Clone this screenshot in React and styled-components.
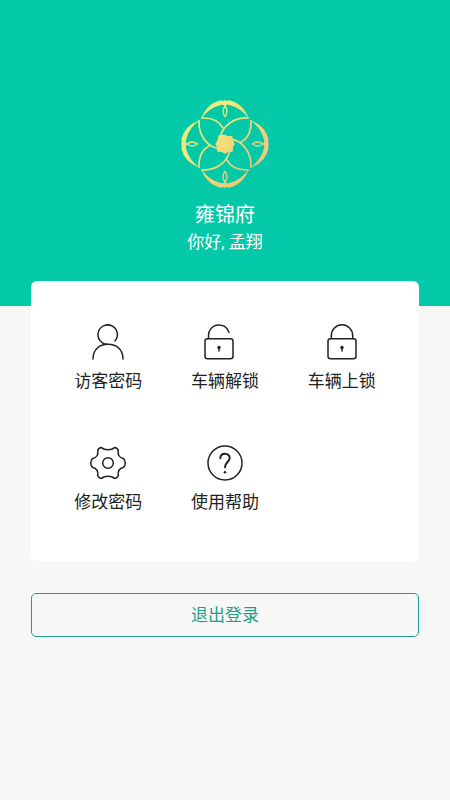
import React from 'react'
import styled, { createGlobalStyle } from 'styled-components'

const GlobalStyle = createGlobalStyle`
    * {
        box-sizing: border-box;
    }
    body {
        margin: 0;
        background: #F7F7F7;
        font-family: Roboto, 'Noto Sans CJK SC', sans-serif;
    }
`
const Page = styled.div`
    display: flex;
    flex-direction: column;
    min-height: 100vh;
`
const Header = styled.header`
    display: flex;
    flex-direction: column;
    align-items: center;
    padding: 100px 16px 51px;
    background: #03C9A8;
    color: #FFFFFF;
`
const Title = styled.h1`
    margin: 13px 0 0;
    font-weight: 400;
    font-size: 20px;
    line-height: 28px;
`
const Greeting = styled.p`
    margin: 0;
    font-size: 17px;
    line-height: 26px;
`
const Content = styled.main`
    display: flex;
    flex-direction: column;
    gap: 32px;
    padding: 0 31px 32px;
    margin-top: -25px;
`
const Card = styled.nav`
    display: grid;
    grid-template-columns: repeat(3, 1fr);
    row-gap: 50px;
    padding: 43px 19px 45px;
    background: #FFFFFF;
    border-radius: 6px;
`
const MenuButton = styled.button`
    display: flex;
    flex-direction: column;
    align-items: center;
    gap: 7px;
    padding: 0;
    border: 0;
    background: none;
    color: #222222;
    font-family: inherit;
    font-size: 17px;
    line-height: 28px;
    cursor: pointer;
`
const Icon = styled.svg`
    width: 36px;
    height: 36px;
    fill: none;
    stroke: #222222;
    stroke-width: 1.5;
    stroke-linecap: round;
    stroke-linejoin: round;
    overflow: visible;
`
const LogoutButton = styled.button`
    height: 44px;
    border: 1px solid #1F9E8A;
    border-radius: 5px;
    background: transparent;
    color: #1F9E8A;
    font-family: inherit;
    font-size: 17px;
    line-height: 28px;
    cursor: pointer;
`

const Petal = ({ angle }) => (
    <g transform={`rotate(${angle} 150 150)`}>
        <path
            fill="#fff"
            stroke="none"
            d="M79 74Q95 28 138 19L144 21L150 18L156 21L162 19Q205 28 221 74Q199 42 163 33Q156 31 150 36Q144 31 137 33Q101 42 79 74Z"
        />
        <path strokeWidth="4" d="M150 36Q138 52 150 68Q162 52 150 36Z" />
        <path strokeWidth="5" d="M80 72Q127 70 145 103" />
        <path strokeWidth="5" d="M220 72C182 70 136 92 134 144" />
    </g>
)

const Logo = () => (
    <svg width="88" height="88" viewBox="18 18 264 264" aria-hidden="true">
        <defs>
            <linearGradient id="gold" x1="0" y1="0" x2="1" y2="1">
                <stop offset="0.1" stopColor="#E8F77D" />
                <stop offset="0.5" stopColor="#F3DB78" />
                <stop offset="0.9" stopColor="#E9C37A" />
            </linearGradient>
            <mask id="flower" maskUnits="userSpaceOnUse" x="0" y="0" width="300" height="300">
                <g fill="none" stroke="#fff" strokeLinecap="round">
                    {[0, 90, 180, 270].map(angle => <Petal key={angle} angle={angle} />)}
                </g>
                <path
                    fill="#fff"
                    d="M131 124L150 122L158 126L172 127L174 139L179 150L174 160L173 173L160 174L150 179L140 174L127 173L126 160L121 150L127 140Z"
                />
            </mask>
        </defs>
        <rect x="18" y="18" width="264" height="264" fill="url(#gold)" mask="url(#flower)" />
    </svg>
)

const VisitorIcon = () => (
    <Icon viewBox="0 0 36 36">
        <path d="M25 17A9.7 9.7 0 1 0 17 20.3" />
        <path d="M3 35C3 26 9 20.3 18 20.3S33 26 33 35" />
    </Icon>
)

const Keyhole = () => (
    <>
        <circle cx="18" cy="23.5" r="1.7" fill="#222222" stroke="none" />
        <path d="M18 24V27" />
    </>
)

const UnlockIcon = () => (
    <Icon viewBox="6 0 36 36">
        <rect x="4" y="14.7" width="28" height="20" rx="2.5" />
        <path d="M7.5 14.5V11.5A10.5 10.5 0 0 1 28 8.2" />
        <Keyhole />
    </Icon>
)

const LockIcon = () => (
    <Icon viewBox="0 0 36 36">
        <rect x="4" y="14.7" width="28" height="20" rx="2.5" />
        <path d="M7.3 14.5V11.5A10.7 10.7 0 0 1 28.7 11.5V14.5" />
        <Keyhole />
    </Icon>
)

const SettingsIcon = () => (
    <Icon viewBox="0 0 36 36">
        <path d="M11.5 2.6C9.5 2.8 8.2 4 7.7 5.5C8.5 9.5 6.5 12.7 2.3 13.8Q.8 15.5 .8 18T2.3 22.2C6.5 23.3 8.5 26.5 7.7 30.5C8.2 32 9.5 33.2 11.5 33.4C14.5 30.5 21.5 30.5 24.5 33.4C26.5 33.2 27.8 32 28.3 30.5C27.5 26.5 29.5 23.3 33.7 22.2Q35.2 20.5 35.2 18T33.7 13.8C29.5 12.7 27.5 9.5 28.3 5.5C27.8 4 26.5 2.8 24.5 2.6C21.5 5.5 14.5 5.5 11.5 2.6Z" />
        <circle cx="18" cy="18" r="5.3" />
    </Icon>
)

const HelpIcon = () => (
    <Icon viewBox="0 0 36 36">
        <circle cx="18" cy="18" r="17" />
        <path strokeWidth="2" d="M13.3 13.3C13.3 10.3 15.3 8.7 18 8.7S22.7 10.5 22.7 13.2C22.7 16.5 18 17.3 18 22.3" />
        <circle cx="18" cy="27.2" r="1.3" fill="#222222" stroke="none" />
    </Icon>
)

const items = [
    { label: '访客密码', Image: VisitorIcon },
    { label: '车辆解锁', Image: UnlockIcon },
    { label: '车辆上锁', Image: LockIcon },
    { label: '修改密码', Image: SettingsIcon },
    { label: '使用帮助', Image: HelpIcon },
]

const App = () => {
    return (
        <>
            <GlobalStyle />
            <Page lang="zh-CN">
                <Header>
                    <Logo />
                    <Title>雍锦府</Title>
                    <Greeting>你好, 孟翔</Greeting>
                </Header>
                <Content>
                    <Card>
                        {items.map(({ label, Image }) => (
                            <MenuButton key={label} type="button">
                                <Image />
                                {label}
                            </MenuButton>
                        ))}
                    </Card>
                    <LogoutButton type="button">退出登录</LogoutButton>
                </Content>
            </Page>
        </>
    )
}

export default App
